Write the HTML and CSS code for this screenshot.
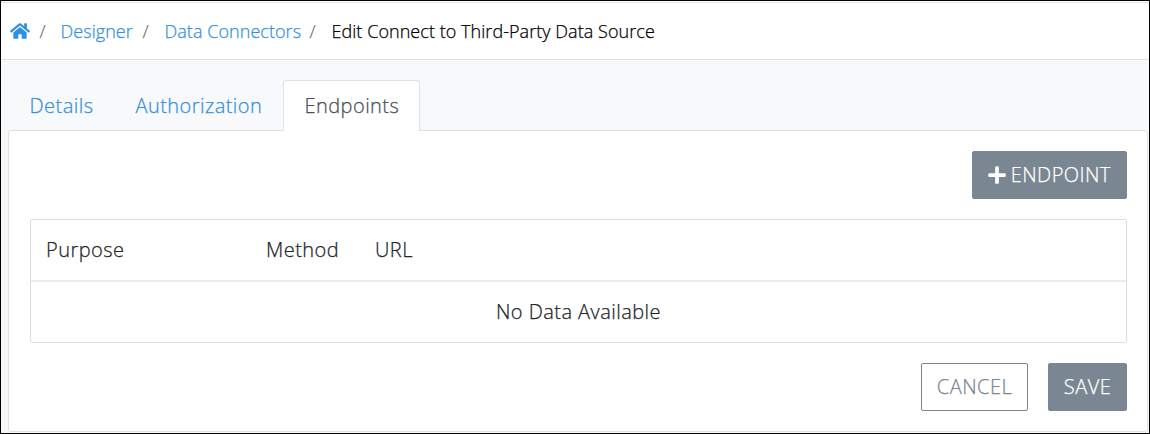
FILE: index.html
```html
<!DOCTYPE html>
<html lang="en">
<head>
<meta charset="utf-8">
<title>Edit Connect to Third-Party Data Source</title>
<link rel="stylesheet" href="styles.css">
</head>
<body>
<div class="frame">
  <nav class="breadcrumb">
    <a class="home" href="#" aria-label="Home"><svg viewBox="0 0 576 512" width="20" height="18"><path fill="currentColor" d="M280.4 148.3L96 300.1V464a16 16 0 0 0 16 16l112.1-.3a16 16 0 0 0 15.900-16V368a16 16 0 0 1 16-16h64a16 16 0 0 1 16 16v95.600a16 16 0 0 0 16 16.100L464 480a16 16 0 0 0 16-16V300L295.700 148.300a12.200 12.200 0 0 0-15.300 0zM571.600 251.500L488 182.600V44a12 12 0 0 0-12-12h-56a12 12 0 0 0-12 12v72.600L318.500 43a48 48 0 0 0-61 0L4.300 251.500a12 12 0 0 0-1.600 16.900l25.500 31a12 12 0 0 0 16.900 1.600l235.200-193.700a12.200 12.200 0 0 1 15.300 0L530.900 301a12 12 0 0 0 16.900-1.600l25.500-31a12 12 0 0 0-1.700-16.900z"/></svg></a>
    <span class="slash slash-first">/</span>
    <a class="crumb crumb-designer" href="#">Designer</a>
    <span class="slash">/</span>
    <a class="crumb crumb-connectors" href="#">Data Connectors</a>
    <span class="slash">/</span>
    <span class="current">Edit Connect to Third-Party Data Source</span>
  </nav>
  <main class="content">
    <div class="tabs">
      <a class="tab tab-details" href="#">Details</a>
      <a class="tab tab-authorization" href="#">Authorization</a>
      <a class="tab tab-endpoints active" href="#">Endpoints</a>
    </div>
    <section class="panel">
      <div class="toolbar">
        <button class="btn btn-add"><svg viewBox="0 0 448 512" width="18" height="20"><path fill="currentColor" d="M416 208H272V64c0-17.670-14.330-32-32-32h-32c-17.670 0-32 14.330-32 32v144H32c-17.670 0-32 14.330-32 32v32c0 17.670 14.330 32 32 32h144v144c0 17.670 14.330 32 32 32h32c17.670 0 32-14.330 32-32V304h144c17.670 0 32-14.330 32-32v-32c0-17.670-14.330-32-32-32z"/></svg><span>ENDPOINT</span></button>
      </div>
      <div class="table">
        <div class="head"><span>Purpose</span><span>Method</span><span>URL</span></div>
        <div class="empty">No Data Available</div>
      </div>
      <div class="actions">
        <button class="btn btn-outline">CANCEL</button>
        <button class="btn btn-save">SAVE</button>
      </div>
    </section>
  </main>
</div>
</body>
</html>
```
FILE: styles.css
```css
* { box-sizing: border-box; }
body {
  margin: 0;
  font-family: "Open Sans", sans-serif;
  font-size: 20px;
  font-weight: 300;
  line-height: 30px;
  letter-spacing: 0.45px;
  -webkit-text-stroke: 0.25px currentColor;
  color: #212529;
  background: #fff;
}
a { color: #3490dc; text-decoration: none; }
.frame {
  display: flex;
  flex-direction: column;
  width: 1150px;
  height: 434px;
  border: 1px solid #000;
  overflow: hidden;
}
.breadcrumb {
  display: flex;
  align-items: center;
  flex: none;
  height: 58px;
  margin-top: 1px;
  padding-left: 9px;
  border-top: 1px solid #e6dfec;
  border-bottom: 1px solid #dee2e6;
  font-size: 18px;
  letter-spacing: 0.05px;
  white-space: nowrap;
}
.home { display: flex; width: 29.5px; color: #2d91e2; }
.slash { width: 22px; color: #6c757d; }
.slash-first { width: 21px; }
.crumb-designer { width: 82px; }
.crumb-connectors { width: 145px; }
.current { color: #000; }
.content {
  flex: 1;
  padding: 20px 1px 1px 7px;
  background: #f8f9fb;
}
.tabs { display: flex; height: 50px; }
.tab {
  height: 51px;
  padding: 10px 0 10px 20.5px;
  border: 1px solid transparent;
  border-bottom: 0;
  white-space: nowrap;
}
.tab-details { width: 106px; }
.tab-authorization { width: 169px; }
.tab-endpoints { width: 137px; }
.tab.active {
  position: relative;
  color: #495057;
  background: #fff;
  border-color: #dee2e6;
  border-radius: 3px 3px 0 0;
}
.panel {
  height: 302px;
  padding: 20px;
  padding-left: 21px;
  background: #fff;
  border: 1px solid #dee2e6;
  border-radius: 3px;
}
.toolbar, .actions { display: flex; justify-content: flex-end; }
.btn {
  display: flex;
  align-items: center;
  justify-content: center;
  height: 48px;
  padding: 0;
  font: inherit;
  letter-spacing: inherit;
  color: #fff;
  background: #7a8793;
  border: 1px solid #7a8793;
  border-radius: 2px;
}
.btn-add { width: 155px; gap: 4.5px; }
.btn-outline { width: 107px; color: #7a8793; background: #fff; }
.btn-save { width: 79px; }
.table {
  height: 124px;
  margin: 20px 0;
  border: 1px solid #dedede;
  border-radius: 2px;
}
.head {
  display: grid;
  grid-template-columns: 220px 109px 1fr;
  height: 62px;
  padding: 15px;
  border-bottom: 2px solid #e9ecef;
}
.empty { padding: 15px; text-align: center; }
.actions { gap: 20px; }
```
